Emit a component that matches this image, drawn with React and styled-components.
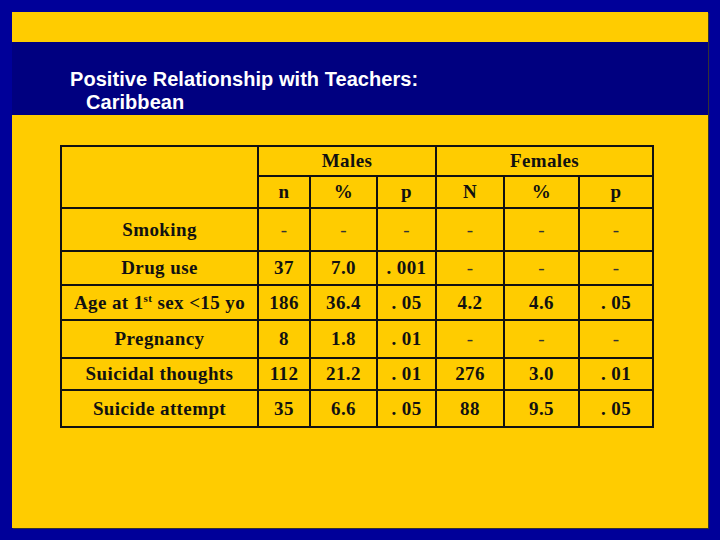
import React from 'react';
import styled, { createGlobalStyle } from 'styled-components';

const GlobalStyle = createGlobalStyle`
    html, body {
        margin: 0;
        padding: 0;
        background-color: #000099;
    }
`;

const Page = styled.div`
    width: 720px;
    height: 540px;
    padding: 12px;
    box-sizing: border-box;
    background-color: #000099;
`;

const Slide = styled.div`
    width: 696px;
    height: 516px;
    background-color: #FFCC00;
    box-shadow: 1px 1px 0 #333;
    display: flex;
    flex-direction: column;
`;

const TopStrip = styled.div`
    height: 30px;
`;

const TitleBand = styled.div`
    height: 73px;
    box-sizing: border-box;
    background-color: #000080;
    padding: 26px 0 0 58px;
    color: #ffffff;
    font-family: "Liberation Sans", Arial, sans-serif;
    font-weight: bold;
    font-size: 20px;
    line-height: 23px;
    letter-spacing: 0.05px;
`;

const TitleLine = styled.div`
    padding-left: ${props => props.indent || 0}px;
    white-space: nowrap;
`;

const Body = styled.div`
    padding: 30px 0 0 48px;
`;

const Table = styled.table`
    border-collapse: collapse;
    border: 2px solid #111;
    table-layout: fixed;
    width: 594px;
    font-family: "Liberation Serif", "Times New Roman", serif;
    font-weight: bold;
    font-size: 19px;
    letter-spacing: 0.4px;
    color: #111;
`;

const Cell = styled.td`
    border: 2px solid #111;
    padding: 0;
    text-align: center;
    vertical-align: middle;
    white-space: nowrap;
    height: ${props => props.h}px;
    line-height: 20px;
`;

const Dash = styled.span`
    font-weight: normal;
    color: #333;
`;

const Sup = styled.sup`
    font-size: 11px;
    vertical-align: 7px;
    line-height: 0;
`;

const cols = [197, 52, 67, 59, 68, 75, 74];

const rows = [
    { label: 'Smoking', h: 41, vals: ['-', '-', '-', '-', '-', '-'] },
    { label: 'Drug use', h: 32, vals: ['37', '7.0', '. 001', '-', '-', '-'] },
    { label: 'age', h: 33, vals: ['186', '36.4', '. 05', '4.2', '4.6', '. 05'] },
    { label: 'Pregnancy', h: 36, vals: ['8', '1.8', '. 01', '-', '-', '-'] },
    { label: 'Suicidal thoughts', h: 30, vals: ['112', '21.2', '. 01', '276', '3.0', '. 01'] },
    { label: 'Suicide attempt', h: 35, vals: ['35', '6.6', '. 05', '88', '9.5', '. 05'] },
];

const Value = ({ v }) => (v === '-' ? <Dash>-</Dash> : v);

const Label = ({ label }) => {
    if (label === 'age') {
        return <>Age at 1<Sup>st</Sup> sex &lt;15 yo</>;
    }
    return label;
};

const App = () => {
    return (
        <>
            <GlobalStyle />
            <Page>
                <Slide>
                    <TopStrip />
                    <TitleBand>
                        <TitleLine>Positive Relationship with Teachers:</TitleLine>
                        <TitleLine indent={16}>Caribbean</TitleLine>
                    </TitleBand>
                    <Body>
                        <Table>
                            <colgroup>
                                {cols.map((w, i) => <col key={i} style={{ width: w }} />)}
                            </colgroup>
                            <tbody>
                                <tr>
                                    <Cell rowSpan={2} h={28} />
                                    <Cell colSpan={3} h={28}>Males</Cell>
                                    <Cell colSpan={3} h={28}>Females</Cell>
                                </tr>
                                <tr>
                                    {['n', '%', 'p', 'N', '%', 'p'].map((t, i) => (
                                        <Cell key={i} h={30}>{t}</Cell>
                                    ))}
                                </tr>
                                {rows.map(row => (
                                    <tr key={row.label}>
                                        <Cell h={row.h}><Label label={row.label} /></Cell>
                                        {row.vals.map((v, i) => (
                                            <Cell key={i} h={row.h}><Value v={v} /></Cell>
                                        ))}
                                    </tr>
                                ))}
                            </tbody>
                        </Table>
                    </Body>
                </Slide>
            </Page>
        </>
    );
};

export default App;
